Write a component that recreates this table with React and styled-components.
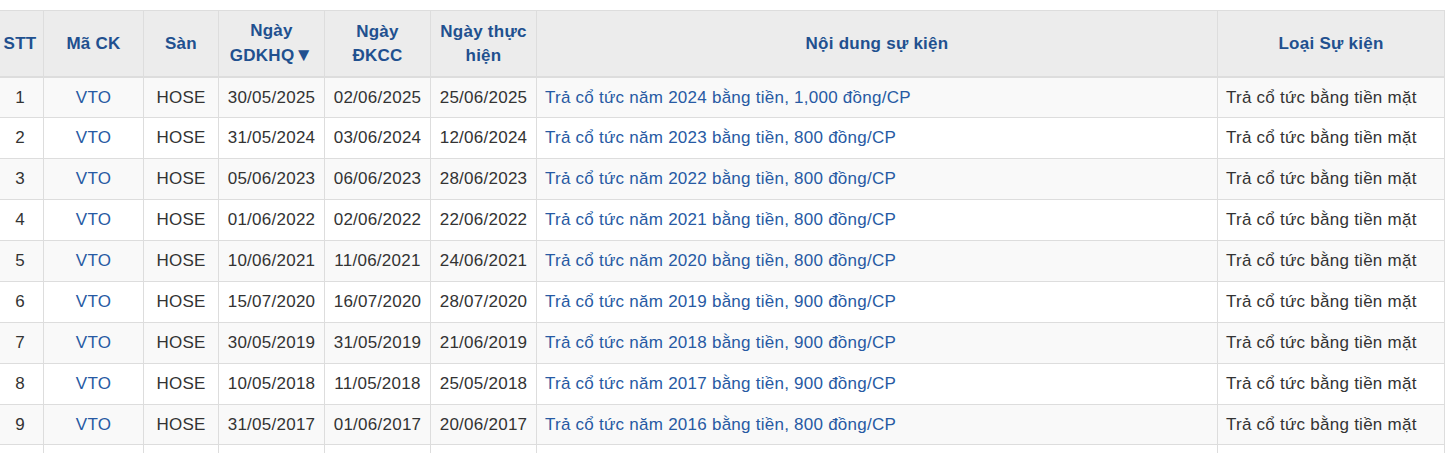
import React from 'react';
import styled, { createGlobalStyle } from 'styled-components';

const GlobalStyle = createGlobalStyle`
    html, body {
        margin: 0;
        padding: 0;
        background: #fff;
        overflow: hidden;
    }
    body {
        font-family: "Liberation Sans", Arial, sans-serif;
        font-size: 17px;
        color: #333;
    }
`;

const Wrapper = styled.div`
    padding-top: 10px;
    margin-left: -4px;
`;

const Table = styled.table`
    width: 1448px;
    border-collapse: collapse;
    table-layout: fixed;
    line-height: 24px;
    letter-spacing: 0.25px;
`;

const Th = styled.th`
    background-color: #ececec;
    color: #21508f;
    font-weight: bold;
    text-align: center;
    vertical-align: middle;
    padding: 8px ${props => props.$tight ? '4px' : '8px'} 7.5px;
    border: 1px solid #ddd;
    border-bottom-width: 2px;
`;

const Arrow = styled.span`
    font-size: 19px;
    letter-spacing: 0;
`;

const Row = styled.tr`
    background-color: ${props => props.$odd ? '#f9f9f9' : '#fff'};
`;

const Td = styled.td`
    padding: 8px ${props => props.$tight ? '4px' : '8px'};
    line-height: 23.88px;
    border: 1px solid #ddd;
    text-align: ${props => props.$left ? 'left' : 'center'};
    vertical-align: middle;
    white-space: nowrap;
    color: ${props => props.$link ? '#275aa3' : '#333'};
`;

const columns = [47, 100, 75, 106, 106, 106, 681, 227];

const events = [
    ['30/05/2025', '02/06/2025', '25/06/2025', 'Trả cổ tức năm 2024 bằng tiền, 1,000 đồng/CP'],
    ['31/05/2024', '03/06/2024', '12/06/2024', 'Trả cổ tức năm 2023 bằng tiền, 800 đồng/CP'],
    ['05/06/2023', '06/06/2023', '28/06/2023', 'Trả cổ tức năm 2022 bằng tiền, 800 đồng/CP'],
    ['01/06/2022', '02/06/2022', '22/06/2022', 'Trả cổ tức năm 2021 bằng tiền, 800 đồng/CP'],
    ['10/06/2021', '11/06/2021', '24/06/2021', 'Trả cổ tức năm 2020 bằng tiền, 800 đồng/CP'],
    ['15/07/2020', '16/07/2020', '28/07/2020', 'Trả cổ tức năm 2019 bằng tiền, 900 đồng/CP'],
    ['30/05/2019', '31/05/2019', '21/06/2019', 'Trả cổ tức năm 2018 bằng tiền, 900 đồng/CP'],
    ['10/05/2018', '11/05/2018', '25/05/2018', 'Trả cổ tức năm 2017 bằng tiền, 900 đồng/CP'],
    ['31/05/2017', '01/06/2017', '20/06/2017', 'Trả cổ tức năm 2016 bằng tiền, 800 đồng/CP'],
    ['26/05/2016', '30/05/2016', '17/06/2016', 'Trả cổ tức năm 2015 bằng tiền, 800 đồng/CP'],
];

const App = () => (
    <>
        <GlobalStyle />
        <Wrapper>
            <Table>
                <colgroup>
                    {columns.map((w, i) => <col key={i} style={{ width: w }} />)}
                </colgroup>
                <thead>
                    <tr>
                        <Th $tight>STT</Th>
                        <Th>Mã CK</Th>
                        <Th>Sàn</Th>
                        <Th>Ngày<br />GDKHQ<Arrow>▼</Arrow></Th>
                        <Th>Ngày<br />ĐKCC</Th>
                        <Th>Ngày thực<br />hiện</Th>
                        <Th>Nội dung sự kiện</Th>
                        <Th>Loại Sự kiện</Th>
                    </tr>
                </thead>
                <tbody>
                    {events.map((ev, i) => (
                        <Row key={i} $odd={i % 2 === 0}>
                            <Td $tight>{i + 1}</Td>
                            <Td $link>VTO</Td>
                            <Td>HOSE</Td>
                            <Td>{ev[0]}</Td>
                            <Td>{ev[1]}</Td>
                            <Td>{ev[2]}</Td>
                            <Td $left $link>{ev[3]}</Td>
                            <Td $left>Trả cổ tức bằng tiền mặt</Td>
                        </Row>
                    ))}
                </tbody>
            </Table>
        </Wrapper>
    </>
);

export default App;
